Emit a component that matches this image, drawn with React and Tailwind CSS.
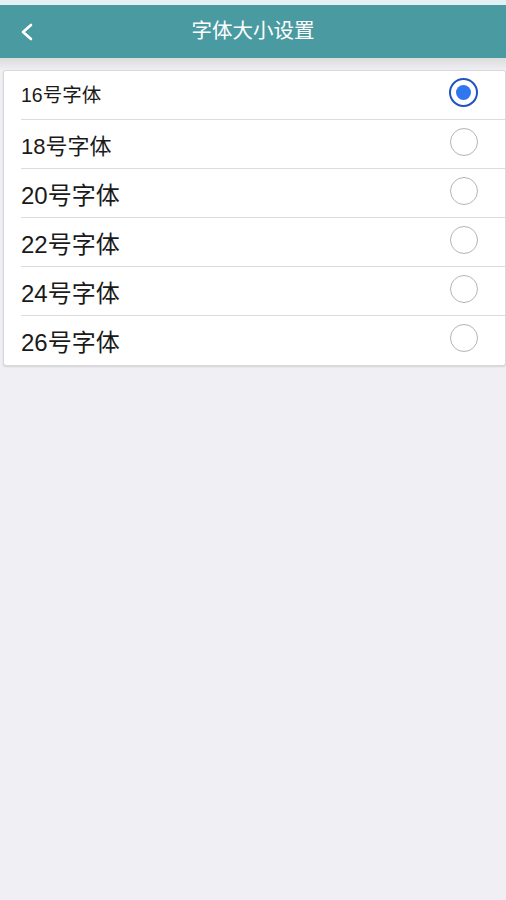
import React from "react";

const rows = [
  { label: "16号字体", size: "text-[19.5px] pt-[2px]", selected: true },
  { label: "18号字体", size: "text-[22px] pt-[4px]" },
  { label: "20号字体", size: "text-[24px] pt-[5px]" },
  { label: "22号字体", size: "text-[24px] pt-[5px]" },
  { label: "24号字体", size: "text-[24px] pt-[5px]" },
  { label: "26号字体", size: "text-[24px] pt-[5px]" },
];

function Radio({ selected }) {
  if (selected) {
    return (
      <div className="w-[29px] h-[29px] rounded-full border-2 border-[#2152c4] flex items-center justify-center">
        <div className="w-[15px] h-[15px] rounded-full bg-[#2f77ee]" />
      </div>
    );
  }
  return <div className="w-[28px] h-[28px] rounded-full border-[1.5px] border-[#b4b4b4]" />;
}

export default function App() {
  return (
    <div className="w-[506px] h-[900px] bg-[#efeff4] flex flex-col" style={{ fontFamily: '"Liberation Sans", "Noto Sans CJK SC", sans-serif' }}>
      <div className="h-[5px] bg-[#e3f1f4]" />
      <div className="h-[53px] bg-[#4a9aa1] flex items-center relative">
        <div className="absolute left-[20px] top-[18px]">
          <svg width="14" height="18" viewBox="0 0 14 18">
            <path d="M11 2 L3 9 L11 16" fill="none" stroke="#ffffff" strokeWidth="2.6" strokeLinecap="round" strokeLinejoin="round" />
          </svg>
        </div>
        <div className="flex-1 text-center text-white text-[20.5px]">字体大小设置</div>
      </div>
      <div className="h-[12px] bg-gradient-to-b from-[#dcdcdc] to-[#efeff4]" />
      <div className="ml-[3px] bg-white border border-[#d8d8d8] rounded-[3px] shadow-[0_1px_2px_rgba(0,0,0,0.12)]">
        {rows.map((r, i) => (
          <div key={r.label} className="pl-[17px]">
            <div className={`h-[49px] flex items-center pr-[27px] ${i < rows.length - 1 ? "border-b border-[#dcdcdc]" : ""}`}>
              <div className={`flex-1 text-[#1a1a1a] ${r.size}`}>{r.label}</div>
              <div className="mb-[5px]">
                <Radio selected={r.selected} />
              </div>
            </div>
          </div>
        ))}
      </div>
    </div>
  );
}
